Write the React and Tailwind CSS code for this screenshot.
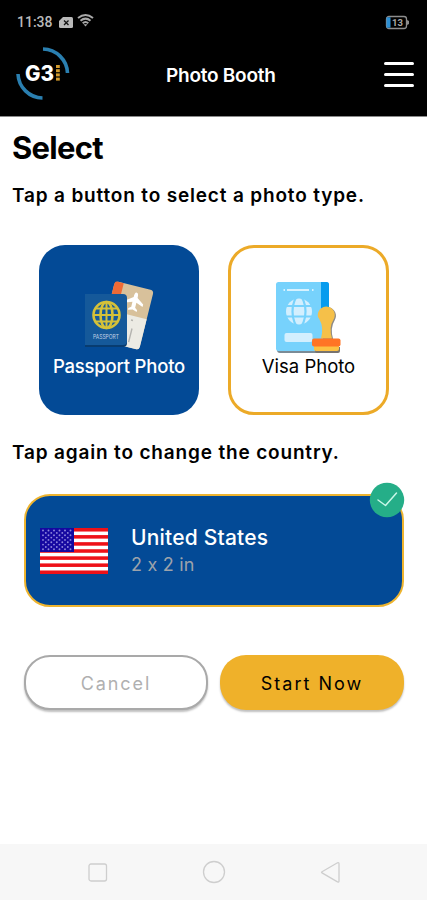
import React from 'react';

const STRIPES = [0, 2, 4, 6, 8, 10, 12];

const Logo = () => (
  <svg width="56" height="56" viewBox="0 0 56 56">
    <path d="M29 3A25 25 0 0 1 53.500 27" fill="none" stroke="#2a7fb0" strokeWidth="3.600" />
    <path d="M4 28A25 25 0 0 0 28.500 52" fill="none" stroke="#2a7fb0" strokeWidth="3.600" />
    <text x="11" y="34.500" fontFamily="Inter, sans-serif" fontSize="21" fontWeight="800" fill="#fff" textLength="29" lengthAdjust="spacingAndGlyphs">G3</text>
    {[19, 23.2, 27.4, 31.6].map((y) => <rect key={y} x="42" y={y} width="3.800" height="3" fill="#d39a2c" />)}
  </svg>
);

const StatusBar = () => (
  <div className="flex h-11 items-center pl-[17px] pr-[17px]">
    <span className="w-[37px] text-[14px] font-medium text-[#b9b9b9] [font-family:Roboto,sans-serif]">11:38</span>
    <svg className="ml-1" width="16" height="13" viewBox="0 0 16 13">
      <path d="M5 1h8.5a1.500 1.500 0 0 1 1.500 1.500v8a1.500 1.500 0 0 1-1.500 1.500h-11A1.500 1.500 0 0 1 1 10.500V5z" fill="#b9b9b9" />
      <path d="M6 4.500l4.500 4.500M10.500 4.500L6 9" stroke="#111" strokeWidth="1.300" />
    </svg>
    <svg className="ml-[3px] mb-1" width="17" height="14" viewBox="0 0 17 14" fill="none" stroke="#a9a9a9" strokeWidth="2">
      <path d="M1 5Q8.500-1 16 5M3.500 7.700Q8.500 3.500 13.500 7.700M5.700 10.200Q8.500 7.700 11.300 10.200" />
      <path d="M6.500 11.300L8.500 13.500l2-2.200z" fill="#a9a9a9" stroke="none" />
    </svg>
    <svg className="ml-auto" width="25" height="15" viewBox="0 0 25 15">
      <rect x="1.500" y="1.500" width="20" height="12" rx="2.500" fill="none" stroke="#8d8d8d" strokeWidth="1.300" />
      <rect x="1.500" y="2.300" width="4" height="10.400" fill="#2b8fd4" />
      <path d="M22 5l2 1v3l-2 1z" fill="#8d8d8d" />
      <text x="12.500" y="11" textAnchor="middle" fontFamily="Roboto, sans-serif" fontSize="9.500" fontWeight="700" fill="#a8a8a8">13</text>
    </svg>
  </div>
);

const PassportIcon = () => (
  <svg width="70" height="74" viewBox="0 0 70 74">
    <g transform="translate(31 1) rotate(14)">
      <rect x="0" y="0" width="40" height="61" rx="3.500" fill="#d8c19b" />
      <path d="M3 0h6v14h-9V3a3 3 0 0 1 3-3z" fill="#ef6a35" />
      <path d="M0 29.500h40V58a3 3 0 0 1-3 3H3a3 3 0 0 1-3-3z" fill="#ecebe4" />
      <path d="M24 6c1.600 0 2 2 2 5l7 5v2.500l-7-2.500v5l2.500 2v1.800L24 23.500l-4.500 1.300V23l2.500-2v-5l-7 2.500V16l7-5c0-3 .400-5 2-5z" fill="#fff" />
      <path d="M17 35h2M25 34h2M28 42v14" stroke="#b4b3af" strokeWidth="1.400" />
    </g>
    <path d="M1 17h38q4 0 4 4v42q0 4-4 4H1z" fill="#083c70" />
    <path d="M1 14h38q4 0 4 4v43q0 4-4 4H1z" fill="#15599a" />
    <g fill="none" stroke="#d5c139" strokeWidth="2.600">
      <circle cx="22.500" cy="35" r="13" />
      <ellipse cx="22.500" cy="35" rx="6" ry="13" />
      <path d="M22.500 22v26M9.500 35h26M12 28.500h21M12 41.500h21" strokeWidth="2" />
    </g>
    <text x="9" y="58.500" fontFamily="Inter, sans-serif" fontSize="5.500" fill="#c3d4e6" textLength="26" lengthAdjust="spacingAndGlyphs">PASSPORT</text>
  </svg>
);

const VisaIcon = () => (
  <svg width="68" height="74" viewBox="0 0 68 74">
    <rect x="2" y="4" width="52" height="69" rx="3" fill="#7b8b96" />
    <rect x="1" y="2" width="53" height="69" rx="2.500" fill="#77d2fc" />
    <path d="M46 2h5.500A2.500 2.500 0 0 1 54 4.500V30h-8z" fill="#079cee" />
    <path d="M12 10h22M8.500 10h1.500M37 10h1.500" stroke="#d6f2ff" strokeWidth="2" />
    <circle cx="24" cy="31.500" r="13" fill="#d3effe" />
    <g fill="none" stroke="#77d2fc" strokeWidth="2.200">
      <ellipse cx="24" cy="31.500" rx="6.500" ry="15" />
      <path d="M10 26h28M10 36.500h28" />
    </g>
    <rect x="9.500" y="53" width="28" height="9" rx="2" fill="#d3effe" />
    <path d="M43.500 37a8.500 8.500 0 1 1 15.500 2.500q-5 8-1.500 19H47q3-11-1.500-19z" fill="#8d8a86" transform="translate(.7 .7)" />
    <path d="M43 37a8.500 8.500 0 1 1 15.500 2.500q-5 8-1.500 19H46q3-11-1.500-19z" fill="#f5c049" />
    <path d="M40 67h25v4q0 2-2 2H42q-2 0-2-2z" fill="#77736f" />
    <path d="M39 65h25v4q0 2-2 2H41q-2 0-2-2z" fill="#fcc143" />
    <rect x="37" y="58.500" width="28.500" height="8" rx="2" fill="#ff7425" />
  </svg>
);

const UsFlag = () => (
  <svg width="68" height="46" viewBox="0 0 68 46">
    <rect width="68" height="46" fill="#fff" />
    {STRIPES.map((n) => <rect key={n} y={n * 3.54} width="68" height="3.54" fill="#ee1118" />)}
    <rect width="34" height="24" fill="#1508a0" />
    {[2.5, 7.2, 11.9, 16.6, 21.3].map((y) =>
      [3, 8.5, 14, 19.5, 25, 30.5].map((x) => <circle key={`${x}-${y}`} cx={x} cy={y} r="0.95" fill="#8f87dc" />)
    )}
    {[4.9, 9.6, 14.3, 19].map((y) =>
      [5.8, 11.3, 16.8, 22.3, 27.8].map((x) => <circle key={`${x}-${y}`} cx={x} cy={y} r="0.95" fill="#8f87dc" />)
    )}
  </svg>
);

const NavBar = () => (
  <nav className="flex h-14 items-center justify-between bg-[#f7f7f7] pl-[87px] pr-[86px]">
    <svg width="21" height="21" viewBox="0 0 21 21" fill="none" stroke="#cecece" strokeWidth="1.300">
      <rect x="2" y="2" width="17.500" height="17" rx="2" />
    </svg>
    <svg width="24" height="24" viewBox="0 0 24 24" fill="none" stroke="#cecece" strokeWidth="1.300">
      <circle cx="12" cy="12" r="10.500" />
    </svg>
    <svg width="21" height="23" viewBox="0 0 21 23" fill="none" stroke="#cecece" strokeWidth="1.300" strokeLinejoin="round">
      <path d="M17.500 1.800L2 10.700q-1 .600 0 1.200l15.500 9q1.500.500 1.500-1V2.800q0-1.500-1.500-1z" />
    </svg>
  </nav>
);

const App = () => (
  <div className="flex h-[900px] w-full flex-col bg-white text-black [font-family:Inter,sans-serif]">
    <header className="h-[117px] border-b border-[#8a8a8a] bg-black">
      <StatusBar />
      <div className="flex h-[60px] items-center pl-[14px] pr-[13px]">
        <Logo />
        <h1 className="ml-[96px] pt-[5px] text-[19px] font-semibold tracking-[-0.25px] text-white">Photo Booth</h1>
        <div className="ml-auto flex w-[30px] flex-col gap-2 pt-[1px]">
          <span className="h-[3px] rounded-full bg-white"></span>
          <span className="h-[3px] rounded-full bg-white"></span>
          <span className="h-[3px] rounded-full bg-white"></span>
        </div>
      </div>
    </header>

    <main className="flex-1">
      <h2 className="pl-[12px] pt-[11px] text-[31px] font-bold leading-10 tracking-[-0.7px]">Select</h2>
      <p className="mt-[14px] pl-[12px] text-[19px] font-semibold leading-7 tracking-[0.83px]">Tap a button to select a photo type.</p>

      <div className="mt-[35px] flex justify-between pl-[39px] pr-[38px]">
        <button className="flex h-[170px] w-[160px] flex-col items-center rounded-[26px] bg-[#034a96] pt-[35px] text-white">
          <PassportIcon />
          <span className="text-[18.5px] font-medium leading-6 tracking-[-0.2px]">Passport Photo</span>
        </button>
        <button className="flex h-[170px] w-[161px] flex-col items-center rounded-[26px] border-3 border-[#ecaa28] pt-8">
          <VisaIcon />
          <span className="text-[18.5px] leading-6">Visa Photo</span>
        </button>
      </div>

      <p className="mt-6 pl-[12px] text-[19px] font-semibold leading-7 tracking-[0.83px]">Tap again to change the country.</p>

      <div className="relative ml-6 mr-[23px] mt-[27px] flex h-[113px] items-center rounded-[26px] border-2 border-[#eeb42f] bg-[#034a96] pl-[14px]">
        <UsFlag />
        <div className="ml-[23px] pt-[1px]">
          <p className="text-[21px] font-medium leading-7 tracking-[0.2px] text-white">United States</p>
          <p className="text-[18px] leading-[26px] tracking-[0.2px] text-[#9da3ab]">2 x 2 in</p>
        </div>
        <svg className="absolute -right-[3px] -top-[14px]" width="36" height="36" viewBox="0 0 36 36">
          <circle cx="18" cy="18" r="17.200" fill="#25ae88" />
          <path d="M9 18l7.500 5.500L27.500 11" fill="none" stroke="#c9f7e8" strokeWidth="1.500" strokeLinecap="round" strokeLinejoin="round" />
        </svg>
      </div>

      <div className="mt-12 flex gap-3 pl-6 pr-[23px]">
        <button className="h-[55px] w-[184px] rounded-[26px] border-2 border-[#a9a9a9] bg-white pt-px text-[18px] tracking-[1.9px] text-[#b0b0b0] shadow-[0_2px_2px_rgba(0,0,0,0.25)]">Cancel</button>
        <button className="h-[55px] w-[184px] rounded-[26px] bg-[#efb12a] pt-px text-[18px] tracking-[2px] shadow-[0_2px_2px_rgba(0,0,0,0.25)]">Start Now</button>
      </div>
    </main>

    <NavBar />
  </div>
);

export default App;
